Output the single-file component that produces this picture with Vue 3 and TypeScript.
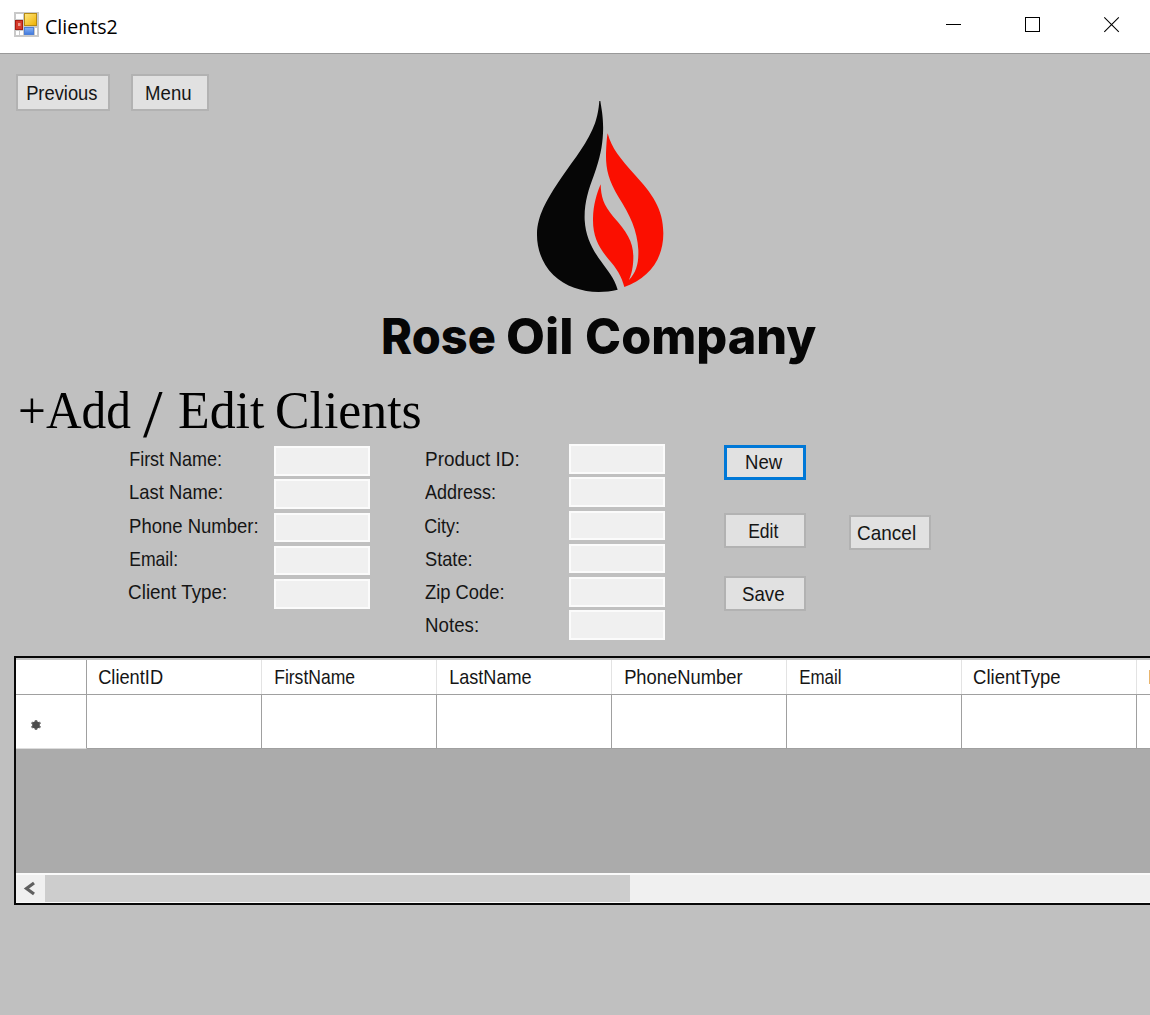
<script setup lang="ts">
import type { Directive } from 'vue'

interface Caption { text: string; x: number; w: number }

const leftFields: Caption[] = [
  { text: 'First Name:', x: 129.5, w: 90.5 },
  { text: 'Last Name:', x: 129.5, w: 91.5 },
  { text: 'Phone Number:', x: 129.5, w: 127 },
  { text: 'Email:', x: 129.5, w: 46.5 },
  { text: 'Client Type:', x: 128.5, w: 97 },
]
const rightFields: Caption[] = [
  { text: 'Product ID:', x: 425.5, w: 92 },
  { text: 'Address:', x: 425, w: 69.5 },
  { text: 'City:', x: 424.5, w: 33.5 },
  { text: 'State:', x: 425, w: 46 },
  { text: 'Zip Code:', x: 425, w: 78 },
  { text: 'Notes:', x: 425.5, w: 51.5 },
]
const columns: Caption[] = [
  { text: 'ClientID', x: 12, w: 64 },
  { text: 'FirstName', x: 13, w: 79.5 },
  { text: 'LastName', x: 13, w: 81 },
  { text: 'PhoneNumber', x: 13, w: 117.5 },
  { text: 'Email', x: 13, w: 41 },
  { text: 'ClientType', x: 12, w: 86 },
  { text: 'ProductID', x: 12, w: 79 },
]

// Stretches a caption horizontally so its ink spans the given width.
const vFit: Directive<HTMLElement, number> = {
  mounted(el, { value }) {
    const cs = getComputedStyle(el)
    const ctx = document.createElement('canvas').getContext('2d')!
    ctx.font = `${cs.fontWeight} ${cs.fontSize} ${cs.fontFamily}`
    const m = ctx.measureText(el.textContent ?? '')
    const scale = value / (m.actualBoundingBoxLeft + m.actualBoundingBoxRight)
    el.style.width = `${value}px`
    el.style.transform = `translateX(${m.actualBoundingBoxLeft * scale}px) scaleX(${scale})`
  },
}
</script>

<template>
  <div class="window">
    <header class="titlebar">
      <svg class="app-icon" width="25" height="25" viewBox="0 0 25 25">
        <defs>
          <linearGradient id="gold" x1="0" y1="0" x2="1" y2="1">
            <stop offset="0" stop-color="#ffe780" /><stop offset="1" stop-color="#eeb000" />
          </linearGradient>
          <linearGradient id="blue" x1="0" y1="0" x2="0" y2="1">
            <stop offset="0" stop-color="#8bb5f5" /><stop offset="1" stop-color="#3f78dc" />
          </linearGradient>
        </defs>
        <rect width="25" height="25" fill="#c9c9c9" />
        <path d="M2 2h7v5H2zM2 19h3v4H2zM6 19h3v4H6zM21 16h2v7h-2z" fill="#fff" />
        <rect x="10.500" y="1.500" width="12" height="12" fill="url(#gold)" stroke="#b58a12" />
        <rect x="1.500" y="8.500" width="7" height="9" fill="#d5392a" stroke="#a61c12" />
        <rect x="4" y="11" width="2.500" height="3" fill="#ee9b8f" />
        <rect x="10.500" y="15.500" width="9" height="7" fill="url(#blue)" stroke="#4e7fd6" />
      </svg>
      <span v-fit="71" class="fit title">Clients2</span>
      <svg class="controls" width="174" height="17" viewBox="0 0 174 17">
        <path d="M0 8.500h15M79.500 1.500h14v14h-14z" fill="none" stroke="#000" shape-rendering="crispEdges" />
        <path d="M158.300 1.300l14.500 14.500M172.800 1.300l-14.500 14.500" fill="none" stroke="#000" stroke-width="1.100" />
      </svg>
    </header>

    <main>
      <section class="top">
        <button class="btn previous"><span v-fit="70" class="fit">Previous</span></button>
        <button class="btn menu"><span v-fit="45" class="fit">Menu</span></button>
        <div class="brand">
          <svg class="flame" width="129" height="193" viewBox="48 30 387 579">
            <path fill="#060606" d="M238 33L241 33C245 60 251 85 249 130C247 170 240 205 222 255C205 300 192 340 194 390C197 440 215 475 243 514C265 545 283 565 293 599C225 615 150 603 100 555C65 520 50 475 51 430C53 380 75 335 125 262C165 205 205 155 225 100C232 78 236 60 238 33Z" />
            <path fill="#fb0f00" d="M263 130C275 175 300 205 345 255C395 310 430 355 430 430C430 510 385 565 313 591C305 560 290 535 265 507C235 470 218 440 219 385C220 345 230 310 242 283C243 320 250 345 280 380C320 425 340 455 340 500C340 530 335 550 327 570C350 545 356 520 355 480C352 420 330 375 295 320C265 270 257 235 258 190C259 165 260 145 263 130Z" />
          </svg>
          <div class="company">
            <span v-fit="111.500" class="fit">Rose</span>
            <span v-fit="64.500" class="fit">Oil</span>
            <span v-fit="230" class="fit">Company</span>
          </div>
        </div>
      </section>

      <h1>
        <span v-fit="111" class="fit">+Add</span>
        <span v-fit="20" class="fit slash">/</span>
        <span v-fit="86" class="fit">Edit</span>
        <span v-fit="143.500" class="fit">Clients</span>
      </h1>

      <section class="form">
        <div class="labels first">
          <label v-for="f in leftFields" :key="f.text" :style="{ paddingLeft: f.x + 'px' }"><span v-fit="f.w" class="fit">{{ f.text }}</span></label>
        </div>
        <div class="inputs first"><input v-for="f in leftFields" :key="f.text" :aria-label="f.text" type="text" disabled></div>
        <div class="labels second">
          <label v-for="f in rightFields" :key="f.text" :style="{ paddingLeft: f.x - 424 + 'px' }"><span v-fit="f.w" class="fit">{{ f.text }}</span></label>
        </div>
        <div class="inputs second"><input v-for="f in rightFields" :key="f.text" :aria-label="f.text" type="text" disabled></div>
        <div class="actions">
          <button class="btn new"><span v-fit="37" class="fit">New</span></button>
          <button class="btn edit"><span v-fit="29.500" class="fit">Edit</span></button>
          <button class="btn save"><span v-fit="42" class="fit">Save</span></button>
        </div>
        <button class="btn cancel"><span v-fit="57.500" class="fit">Cancel</span></button>
      </section>

      <section class="grid">
        <div class="row head">
          <div class="cell corner"></div>
          <div v-for="c in columns" :key="c.text" class="cell" :style="{ paddingLeft: c.x + 'px' }"><span v-fit="c.w" class="fit">{{ c.text }}</span></div>
        </div>
        <div class="row blank">
          <div class="cell corner">
            <svg width="12" height="12" viewBox="0 0 12 12"><path d="M6 1v10M1.500 3.500l9 5M10.500 3.500l-9 5" stroke="#777" stroke-width="2.400" /><circle cx="6" cy="6" r="3.800" fill="#4c4c4c" /></svg>
          </div>
          <div v-for="c in columns" :key="c.text" class="cell"></div>
        </div>
        <div class="empty"></div>
        <div class="scroll">
          <svg width="29" height="27" viewBox="0 0 29 27"><path d="M18 8L10.500 13.500l7.500 5.500" fill="none" stroke="#606060" stroke-width="3.200" /></svg>
          <div class="thumb"></div>
        </div>
      </section>
    </main>
  </div>
</template>

<style>
body { margin: 0; overflow: hidden; background: #c0c0c0; }
</style>

<style scoped>
* { box-sizing: border-box; }
.window {
  width: 1150px; height: 1015px; overflow: hidden; background: #c0c0c0;
  font: 21px/24px "Liberation Sans", Arial, sans-serif; color: #151515;
}
.fit { display: block; white-space: pre; transform-origin: 0 0; text-align: left; flex: none; }
.titlebar {
  display: flex; align-items: flex-start; height: 54px; padding: 12px 24px 0 14px;
  background: #fff; border-bottom: 1px solid #999;
}
.title { margin-left: 7px; font: 20.500px/28px "Open Sans", "Noto Sans", sans-serif; color: #000; }
.controls { margin: 4px 6px 0 auto; }
.top { display: flex; align-items: flex-start; height: 331px; padding: 20px 0 0 16px; }
.btn {
  display: block; flex: none; padding: 0; margin: 0; border: 2px solid #b2b2b2; border-radius: 0;
  background: #e1e1e1; font: inherit; color: inherit; text-align: left; height: 35px; width: 82px;
}
.previous { width: 94px; height: 37px; padding: 0 0 0 9px; }
.menu { width: 78px; height: 37px; margin-left: 21px; padding: 0 0 0 12.500px; }
.brand { width: 436px; margin: 26px 0 0 173px; }
.flame { display: block; margin-left: 154px; }
.company { display: flex; margin: 14px 0 0 1px; font: 800 49px/60px Inter, "Open Sans", sans-serif; color: #060606; }
.company .fit:nth-child(2) { margin-left: 12.500px; }
.company .fit:nth-child(3) { margin-left: 14px; }
h1 {
  display: flex; margin: 0; padding: 0 0 0 19.500px; height: 61px;
  font: 400 52px/52px "Liberation Serif", "Times New Roman", serif; color: #000;
}
h1 .slash { margin: 2px 15.500px 0 12.500px; font-size: 67px; }
h1 .fit:last-child { margin-left: 12.500px; }
.form { display: flex; align-items: flex-start; height: 210px; }
.labels label { display: block; height: 33.300px; }
.labels.first { width: 274px; padding-top: 1px; }
.labels.second { width: 145px; margin-left: 54px; padding-top: 1px; }
.inputs { width: 96px; }
.inputs.second { margin-top: -2px; }
input {
  display: block; width: 96px; height: 29.500px; margin: 0 0 3.750px; padding: 0;
  border: 2px solid #fbfbfb; border-radius: 0; background: #f0f0f0;
}
.actions { margin-left: 59px; margin-top: -1px; }
.new { border: 3px solid #0078d7; padding: 0 0 1px 18.500px; }
.edit { margin-top: 33px; padding: 0 0 0 23px; }
.save { margin-top: 28px; padding: 0 0 0 15.500px; }
.cancel { margin: 69px 0 0 42.500px; padding: 0 0 0 7px; }
.grid { width: 1200px; height: 249px; margin: 0 0 0 14px; border: 2px solid #080808; background: #ababab; overflow: hidden; }
.row { display: flex; width: 1400px; }
.cell { flex: none; width: 175px; background: #fff; border-right: 1px solid #a0a0a0; }
.corner { width: 71px; }
.head { height: 37px; border-top: 2px solid #c4c4c4; border-bottom: 1px solid #a0a0a0; background: #fff; }
.head .cell { padding-top: 5px; border-right-color: #e3e3e3; }
.head .corner { border-right-color: #a0a0a0; }
.blank { height: 54px; }
.blank .cell { border-bottom: 1px solid #a0a0a0; }
.blank .corner { padding: 24px 0 0 14px; border-bottom-color: #dcdcdc; }
.blank svg { display: block; }
.empty { height: 124px; }
.scroll { display: flex; height: 30px; background: #f0f0f0; border-top: 2px solid #fafafa; border-bottom: 1px solid #fafafa; }
.thumb { width: 585px; height: 27px; background: #cdcdcd; }
</style>
